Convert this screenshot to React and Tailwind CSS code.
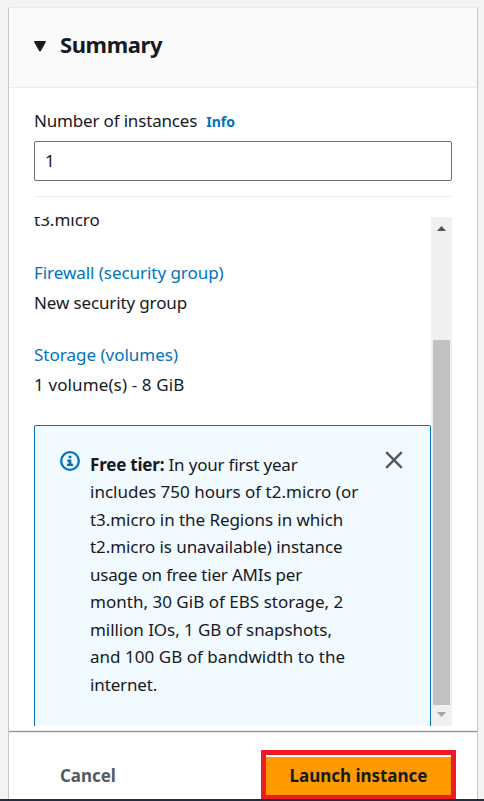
const freeTierLines = [
  { text: "includes 750 hours of t2.micro (or", cls: "tracking-[0px]" },
  { text: "t3.micro in the Regions in which", cls: "tracking-[-0.05px]" },
  { text: "t2.micro is unavailable) instance", cls: "tracking-[-0.08px]" },
  { text: "usage on free tier AMIs per", cls: "tracking-[-0.19px]" },
  { text: "month, 30 GiB of EBS storage, 2", cls: "tracking-[0.02px]" },
  { text: "million IOs, 1 GB of snapshots,", cls: "tracking-[-0.06px]" },
  { text: "and 100 GB of bandwidth to the", cls: "tracking-[0.03px]" },
  { text: "internet.", cls: "tracking-[-0.13px]" },
];

function InfoIcon() {
  return (
    <svg className="h-5 w-5 shrink-0" viewBox="0 0 20 20" fill="none">
      <circle cx="10" cy="10" r="8.8" stroke="#0073bb" strokeWidth="2.3" />
      <path d="M8.6 4.8h2.8v2.5H8.6zM7.2 8.6h4.2v4.2h1.6v2.2H7v-2.2h1.6v-2H7.2z" fill="#0073bb" />
    </svg>
  );
}

function Alert() {
  return (
    <div className="flex h-[340px] w-[397px] shrink-0 rounded-[2px] border border-[#0073bb] bg-[#f1faff] pl-[25px] pr-[27px] pt-[25px]">
      <InfoIcon />
      <div className="-mt-[0.25px] ml-[10px] flex-1 whitespace-nowrap text-[17px] leading-[27.5px]">
        <div>
          <b className="font-bold tracking-[-0.2px]">Free tier:</b>
          <span className="tracking-[-0.19px]"> In your first year</span>
        </div>
        {freeTierLines.map((line) => (
          <div key={line.text}>
            <span className={line.cls}>{line.text}</span>
          </div>
        ))}
      </div>
      <button className="h-[18px] w-[18px] shrink-0">
        <svg viewBox="0 0 18 18" className="h-[18px] w-[18px]" stroke="#545b64" strokeWidth="2.5">
          <path d="M1.2 1.2l15.6 15.6M16.8 1.2L1.2 16.8" />
        </svg>
      </button>
    </div>
  );
}

function Scrollbar() {
  return (
    <div className="flex w-[21px] shrink-0 flex-col items-center bg-[#f0f0f0]">
      <svg className="mt-[9px] h-[5px] w-[9px]" viewBox="0 0 9 5" fill="#505050">
        <path d="M0 5h9L4.5 0z" />
      </svg>
      <div className="mt-[109px] h-[365px] w-[17px] bg-[#c1c1c1]" />
      <svg className="mt-[7px] h-[5px] w-[9px]" viewBox="0 0 9 5" fill="#a3a3a3">
        <path d="M0 0h9L4.5 5z" />
      </svg>
    </div>
  );
}

export default function App() {
  return (
    <div className="flex h-[801px] w-[484px] flex-col overflow-hidden bg-[#f2f3f3] pt-[7px] font-['Noto_Sans',sans-serif] text-[17px] text-[#16191f]">
      <div className="ml-2 flex h-[792px] w-[470px] shrink-0 flex-col border border-b-0 border-[#c4c8c9] border-t-[#eaeded] bg-white">
        <header className="flex h-20 shrink-0 items-center border-b border-[#eaeded] bg-[#fafafa] pl-[25px]">
          <svg className="-mt-[2px] h-[11px] w-3" viewBox="0 0 12 11" fill="#16191f">
            <path d="M.8 0h10.4q1 .2.5 1.2L6.8 10q-.8 1.2-1.6 0L.3 1.2Q-.2.2.8 0z" />
          </svg>
          <h2 className="ml-[14px] pb-[7px] text-[22px] font-bold leading-7 tracking-[-0.4px]">Summary</h2>
        </header>
        <section className="flex h-[109px] shrink-0 flex-col px-[25px] pt-[20px]">
          <div className="flex h-[33px] items-start leading-[26px]">
            <span className="tracking-[-0.17px]">Number of instances</span>
            <a className="ml-[9px] text-[14px] font-bold leading-[28px] text-[#0073bb]">Info</a>
          </div>
          <div className="flex h-10 w-[418px] items-center rounded-[2px] border border-[#687078] px-[10px]">1</div>
          <div className="mt-[15px] h-px w-[418px] bg-[#eaeded]" />
        </section>
        <div className="ml-[25px] mt-5 flex h-[509px] w-[418px] shrink-0 overflow-hidden">
          <div className="flex w-[397px] flex-col overflow-hidden leading-[30px]">
            <div className="-mt-[12px] h-[53px] shrink-0"><span>t3.micro</span></div>
            <a className="h-[30px] shrink-0 text-[#0073bb]"><span className="tracking-[-0.05px]">Firewall (security group)</span></a>
            <div className="h-[52px] shrink-0"><span className="tracking-[-0.13px]">New security group</span></div>
            <a className="h-[30px] shrink-0 text-[#0073bb]"><span>Storage (volumes)</span></a>
            <div className="h-[55px] shrink-0"><span className="tracking-[0.12px]">1 volume(s) - 8 GiB</span></div>
            <Alert />
          </div>
          <Scrollbar />
        </div>
        <footer className="mt-[5px] flex flex-1 items-start border-t border-[#879196] pl-[51px] shadow-[inset_0_1px_0_#eaeded,0_-1px_0_#eaeded]">
          <button className="mt-[31px] w-[201px] text-left font-bold leading-[26px] tracking-[-0.05px] text-[#545b64]">Cancel</button>
          <div className="mt-[18px] h-[50px] w-[195px] shrink-0 border-[5px] border-[#ed1c24] bg-white pt-[2px]">
            <button className="flex h-[38px] w-full items-center justify-center bg-[#ff9900] font-bold tracking-[-0.03px] text-[#16191f]">Launch instance</button>
          </div>
        </footer>
      </div>
      <div className="h-[2px] w-full shrink-0 bg-[#232f3e]" />
    </div>
  );
}
